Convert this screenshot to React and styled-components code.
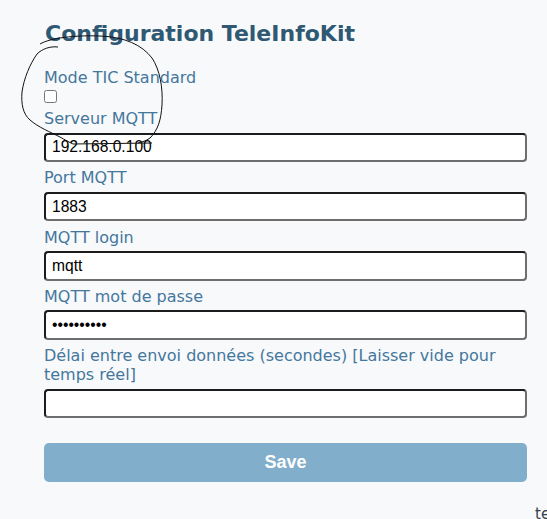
import React from 'react'
import styled, { createGlobalStyle } from 'styled-components'

const GlobalStyle = createGlobalStyle`
  html, body {
    margin: 0;
    padding: 0;
    overflow: hidden;
    background: #f8f9fb;
  }
`

const Page = styled.div`
  position: relative;
  padding: 21px 20px 0 44px;
  font-family: "DejaVu Sans", Verdana, sans-serif;
`

const Title = styled.h1`
  margin: 0 0 21px 1px;
  font-size: 22px;
  line-height: 26px;
  font-weight: bold;
  color: #2f5873;
`

const Form = styled.form`
  display: flex;
  flex-direction: column;
`

const Label = styled.label`
  display: block;
  font-size: 16px;
  line-height: 19px;
  color: #44779d;
  margin-bottom: ${p => (p.$tight ? '2px' : '4.5px')};
`

const Check = styled.input`
  width: 13px;
  height: 13px;
  margin: 1px 0 6px 0;
`

const Field = styled.input`
  box-sizing: border-box;
  width: 100%;
  height: 29.5px;
  margin: 0 0 6.3px 0;
  padding: 0 6px;
  border: 2px solid;
  border-color: #1c1c1c #6e6e6e #6e6e6e #1c1c1c;
  border-radius: 4px;
  background: #fff;
  font-family: "Liberation Sans", Arial, sans-serif;
  font-size: 15.6px;
  color: #000;
  outline: none;
`

const SaveButton = styled.button`
  margin-top: 19px;
  height: 39px;
  border: none;
  border-radius: 5px;
  background: #80aecb;
  color: #fff;
  font-family: "Liberation Sans", Arial, sans-serif;
  font-size: 18px;
  font-weight: bold;
  cursor: pointer;
`

const Footer = styled.div`
  margin: 23px 0 0 491px;
  white-space: nowrap;
  font-size: 15px;
  line-height: 19px;
  color: #33414d;
`

const Scribble = styled.svg`
  position: absolute;
  left: 0;
  top: 0;
  width: 200px;
  height: 160px;
  pointer-events: none;
`

const fields = [
  { label: 'Serveur MQTT', value: '192.168.0.100' },
  { label: 'Port MQTT', value: '1883' },
  { label: 'MQTT login', value: 'mqtt' },
  { label: 'MQTT mot de passe', value: 'mqttpasswd', type: 'password' },
  { label: 'Délai entre envoi données (secondes) [Laisser vide pour temps réel]', value: '' },
]

export default function App() {
  return (
    <>
      <GlobalStyle />
      <Page>
        <Title>Configuration TeleInfoKit</Title>
        <Form onSubmit={e => e.preventDefault()}>
          <Label $tight>Mode TIC Standard</Label>
          <Check type="checkbox" />
          {fields.map(f => (
            <React.Fragment key={f.label}>
              <Label>{f.label}</Label>
              <Field type={f.type || 'text'} defaultValue={f.value} />
            </React.Fragment>
          ))}
          <SaveButton type="submit">Save</SaveButton>
        </Form>
        <Footer>teleinfokit</Footer>
        <Scribble viewBox="0 0 200 160">
          <path
            d="M58 47 C50 46 42 49 37 54 M40 44 C50 38 75 35 100 36 C125 37 142 45 152 58 C160 70 163 88 162 105 C161 120 158 130 150 138 C146 141 142 142 138 143 M37 54 C30 64 24 78 22 92 C21 104 23 114 30 120 C38 127 50 132 60 137 C65 140 69 142 73 144 L152 143"
            fill="none"
            stroke="#111"
            strokeWidth="1"
          />
        </Scribble>
      </Page>
    </>
  )
}
